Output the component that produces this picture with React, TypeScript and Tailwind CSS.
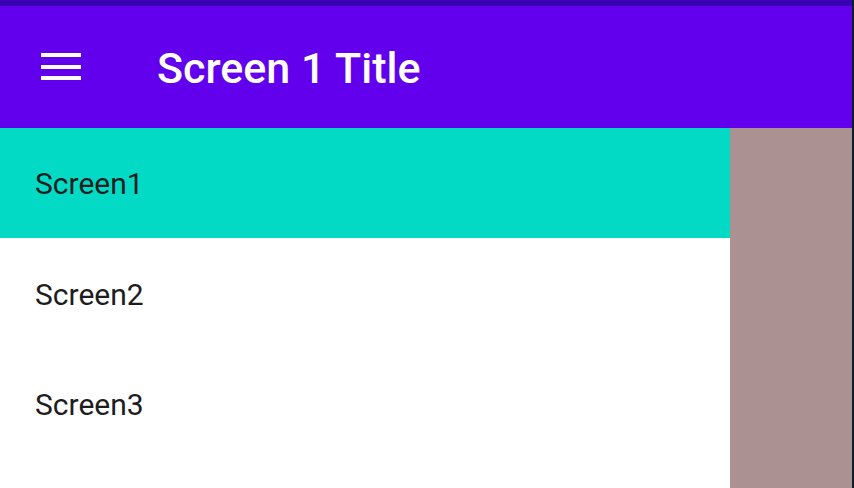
const screens = ["Screen1", "Screen2", "Screen3"];

function MenuIcon() {
  return (
    <svg width="40" height="28" viewBox="0 0 40 28" className="block">
      <rect x="0" y="0" width="40" height="4" fill="white" />
      <rect x="0" y="12" width="40" height="4" fill="white" />
      <rect x="0" y="23" width="40" height="4" fill="white" />
    </svg>
  );
}

export default function App() {
  return (
    <div className="flex h-[488px] w-[854px] overflow-hidden font-['Roboto',sans-serif]">
      <div className="flex flex-1 flex-col">
        {/* status bar */}
        <div className="h-[6px] bg-[#3700B3]" />
        <header className="flex h-[122px] items-center bg-[#6200EE]">
          <button className="ml-[41px] block">
            <MenuIcon />
          </button>
          <h1 className="ml-[76px] mt-[3px] text-[43px] font-medium leading-none text-white">Screen 1 Title</h1>
        </header>
        <div className="flex flex-1">
          <nav className="w-[730px] bg-white">
            {screens.map((s, i) => (
              <div
                key={s}
                className={`flex h-[110px] items-center pl-[35px] text-[30px] text-[#1d1d1d] ${
                  i === 0 ? "bg-[#03DAC5]" : "pt-[3px]"
                }`}
              >
                {s}
              </div>
            ))}
          </nav>
          <div className="flex-1 bg-[#ab9191]" />
        </div>
      </div>
      <div className="w-[2px] bg-[#0b1e24]" />
    </div>
  );
}
